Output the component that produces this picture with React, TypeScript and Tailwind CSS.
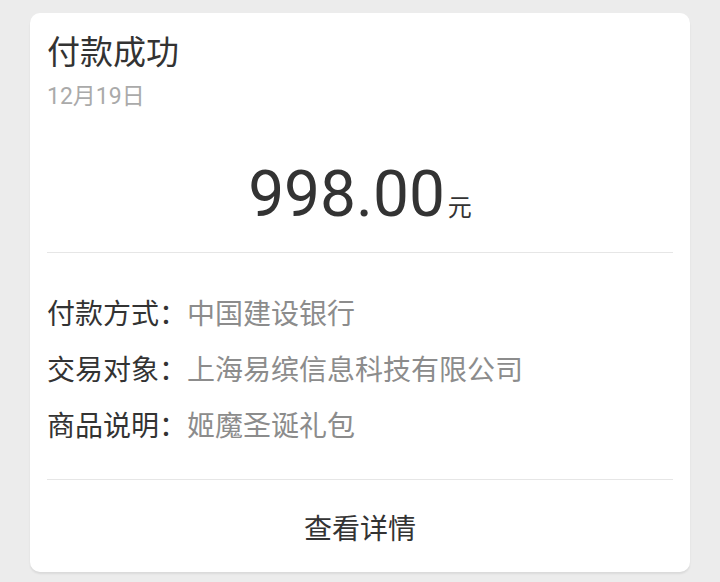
import React from 'react';

const rows = [
  { label: '付款方式', value: '中国建设银行' },
  { label: '交易对象', value: '上海易缤信息科技有限公司' },
  { label: '商品说明', value: '姬魔圣诞礼包' },
];

const cjk = "font-['Roboto','Noto_Sans_CJK_SC',sans-serif]";

export default function App() {
  return (
    <div className={`w-[720px] h-[582px] bg-[#ececec] pt-[13px] px-[30px] ${cjk}`}>
      <div className="bg-white rounded-[10px] shadow-[0_2px_2px_rgba(0,0,0,0.08)] h-[559px] flex flex-col">
        <div className="px-[17px] pt-[20px]">
          <h1 className="text-[33px] leading-[40px] text-[#333]">付款成功</h1>
          <p className="mt-[10px] text-[23px] leading-[28px] text-[#aaa]">12月19日</p>

          <div className="mt-[52px] flex items-baseline justify-center h-[64px]">
            <span className="text-[64px] leading-[64px] text-[#333]">998.00</span>
            <span className="ml-[3px] text-[24px] text-[#333]">元</span>
          </div>

          <div className="mt-[25px] h-px bg-[#e6e6e6]" />

          <div className="pt-[34px] pb-[24px]">
            {rows.map((r) => (
              <div key={r.label} className="flex text-[28px] leading-[56px]">
                <span className="text-[#333]">{r.label}：</span>
                <span className="text-[#8c8c8c]">{r.value}</span>
              </div>
            ))}
          </div>

          <div className="h-px bg-[#e6e6e6]" />
        </div>

        <div className="flex-1 flex items-center justify-center pt-[8px]">
          <span className="text-[28px] text-[#333]">查看详情</span>
        </div>
      </div>
    </div>
  );
}
